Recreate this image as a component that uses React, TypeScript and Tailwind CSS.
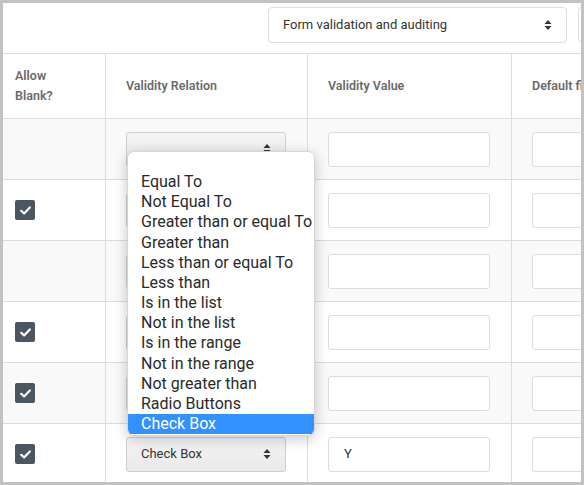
import React from "react"

const options = [
  "",
  "Equal To",
  "Not Equal To",
  "Greater than or equal To",
  "Greater than",
  "Less than or equal To",
  "Less than",
  "Is in the list",
  "Not in the list",
  "Is in the range",
  "Not in the range",
  "Not greater than",
  "Radio Buttons",
  "Check Box",
]

const rows = [
  { checked: false, relation: "", value: "" },
  { checked: true, relation: "", value: "" },
  { checked: false, relation: "", value: "" },
  { checked: true, relation: "", value: "" },
  { checked: true, relation: "", value: "" },
  { checked: true, relation: "Check Box", value: "Y" },
]

function Arrows() {
  return (
    <svg width="8" height="12" viewBox="0 0 8 12" className="shrink-0">
      <path d="M4 1 L7.5 5 H0.5 Z" fill="#333" />
      <path d="M4 11 L7.5 7 H0.5 Z" fill="#333" />
    </svg>
  )
}

function Check() {
  return (
    <div className="flex h-5 w-5 items-center justify-center rounded-[2px] bg-[#4b5661]">
      <svg width="11" height="9" viewBox="0 0 11 9">
        <path d="M1.2 4.8 L4.1 7.4 L9.8 1.4" fill="none" stroke="#fff" strokeWidth="2.2" strokeLinecap="round" strokeLinejoin="round" />
      </svg>
    </div>
  )
}

export default function App() {
  return (
    <div
      className="h-[485px] w-[584px] overflow-hidden border-[3px] border-[#c2c2c2] bg-white text-[#333]"
      style={{ fontFamily: "Roboto, 'Liberation Sans', sans-serif" }}
    >
      {/* barre du haut */}
      <div className="flex h-[51px] items-start gap-[11px] border-b border-[#dcdcdc] pl-[265px] pt-[4px]">
        <div className="flex h-[36px] w-[299px] shrink-0 items-center justify-between rounded-[4px] border border-[#dcdcdc] pl-[14px] pr-[14px] text-[13px]">
          <span>Form validation and auditing</span>
          <Arrows />
        </div>
        <div className="h-[36px] w-[40px] shrink-0 rounded-[4px] border border-[#dcdcdc]" />
      </div>

      {/* tableau */}
      <div className="relative">
        <div className="grid grid-cols-[103px_202px_204px_1fr]">
          <div className="flex h-[65px] flex-col justify-center border-b border-r border-[#dcdcdc] pl-3 text-[12.5px] font-semibold leading-[20px] text-[#6a6a6a]">
            <span>Allow</span>
            <span>Blank?</span>
          </div>
          <div className="flex h-[65px] items-center border-b border-r border-[#dcdcdc] pl-[20px] text-[12.5px] font-semibold text-[#6a6a6a]">
            Validity Relation
          </div>
          <div className="flex h-[65px] items-center border-b border-r border-[#dcdcdc] pl-[20px] text-[12.5px] font-semibold text-[#6a6a6a]">
            Validity Value
          </div>
          <div className="flex h-[65px] items-center overflow-hidden whitespace-nowrap border-b border-[#dcdcdc] pl-[20px] text-[12.5px] font-semibold text-[#6a6a6a]">
            Default field value
          </div>

          {rows.map((r, i) => {
            const bg = i % 2 === 0 ? "bg-[#f9f9f9]" : "bg-white"
            return (
              <React.Fragment key={i}>
                <div className={`flex h-[61px] items-center border-b border-r border-[#dcdcdc] pl-3 ${bg}`}>
                  {r.checked && <Check />}
                </div>
                <div className={`flex h-[61px] items-center border-b border-r border-[#dcdcdc] pl-[20px] ${bg}`}>
                  <div className="flex h-[35px] w-[160px] items-center justify-between rounded-[3px] border border-[#cfcfcf] bg-gradient-to-b from-[#f5f5f5] to-[#e9e9e9] pl-[14px] pr-[14px] text-[13px]">
                    <span>{r.relation}</span>
                    <Arrows />
                  </div>
                </div>
                <div className={`flex h-[61px] items-center border-b border-r border-[#dcdcdc] pl-[20px] ${bg}`}>
                  <div className="flex h-[35px] w-[162px] items-center rounded-[3px] border border-[#dcdcdc] bg-white pl-[15px] text-[13px]">
                    {r.value}
                  </div>
                </div>
                <div className={`flex h-[61px] items-center border-b border-[#dcdcdc] pl-[20px] ${bg}`}>
                  <div className="h-[35px] w-[162px] shrink-0 rounded-[3px] border border-[#dcdcdc] bg-white" />
                </div>
              </React.Fragment>
            )
          })}
        </div>

        {/* liste déroulante ouverte */}
        <div className="absolute left-[124px] top-[97px] w-[188px] overflow-hidden rounded-[7px] border border-[#d6d6d6] bg-white pb-[1px] shadow-[0_3px_14px_rgba(0,0,0,0.22)]">
          {options.map((o, i) => (
            <div
              key={i}
              className={`h-[20.17px] whitespace-nowrap pl-[13px] text-[16px] leading-[20.17px] ${
                o === "Check Box" ? "bg-[#3391ff] text-white" : "text-[#2a2a2a]"
              }`}
            >
              {o}
            </div>
          ))}
        </div>
      </div>
    </div>
  )
}
